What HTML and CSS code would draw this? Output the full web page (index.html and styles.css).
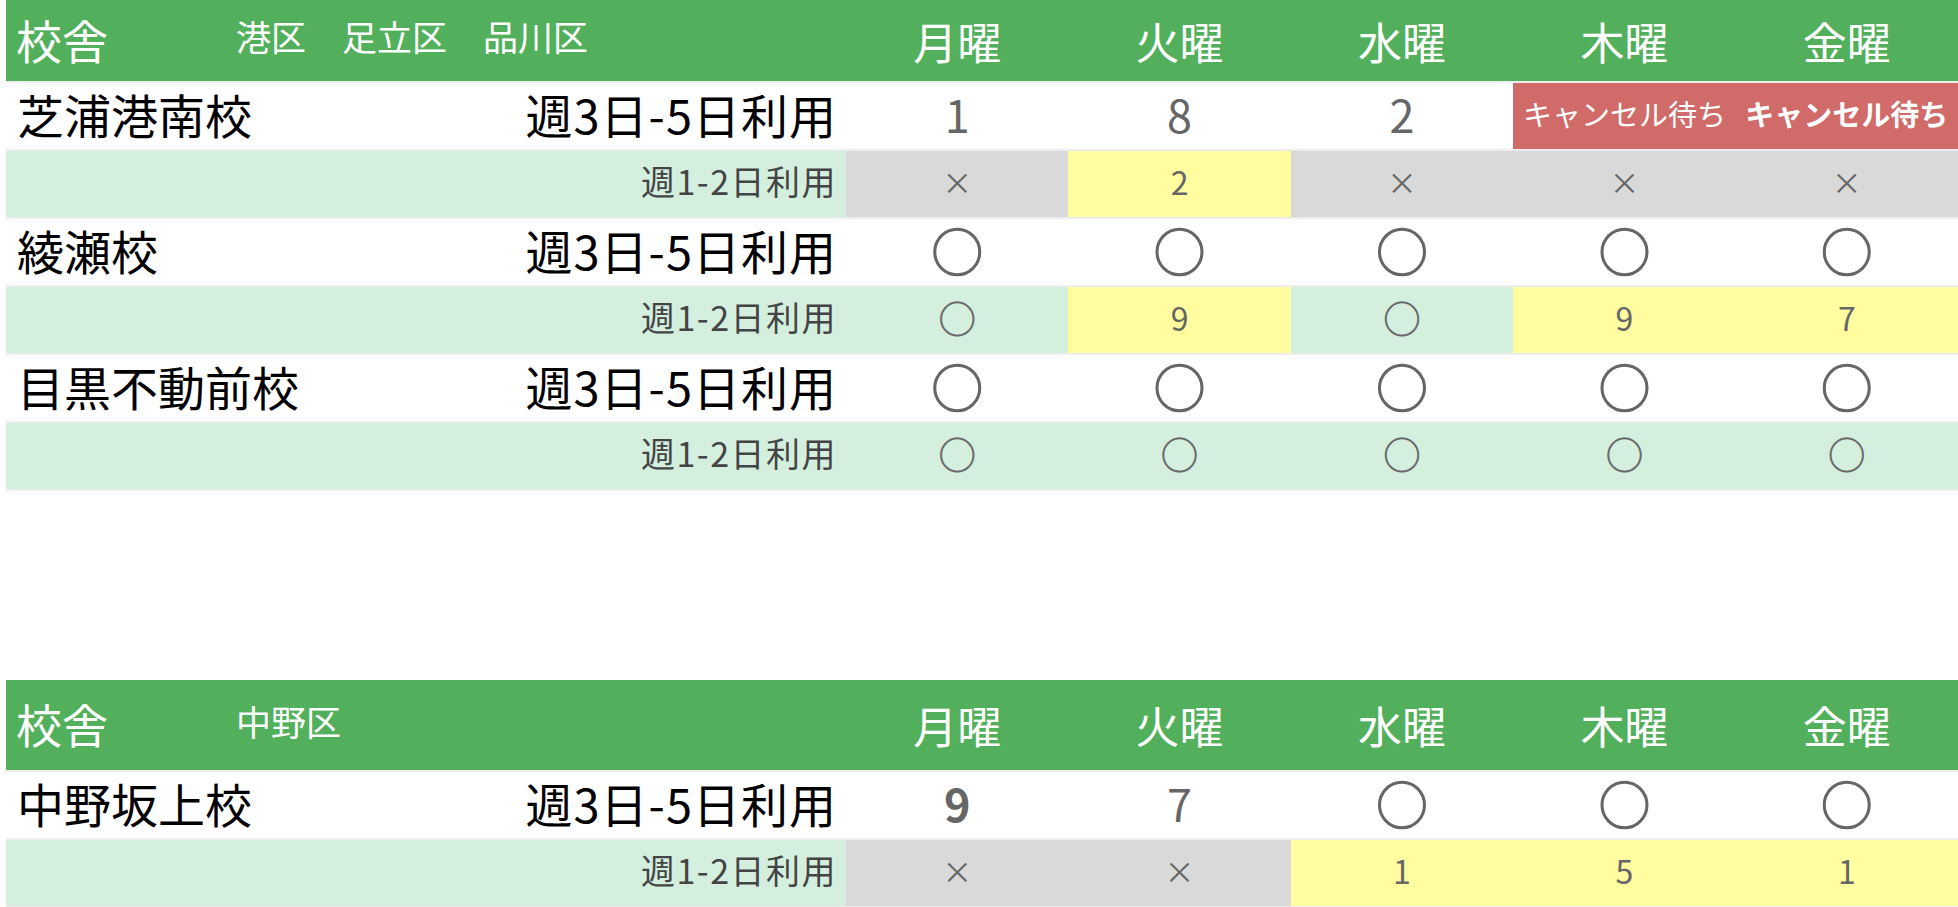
FILE: index.html
```html
<!DOCTYPE html>
<html lang="ja">
<head>
<meta charset="utf-8">
<title>空き状況</title>
<link rel="stylesheet" href="styles.css">
</head>
<body>
<div class="page">
  <table class="sched">
    <colgroup><col class="c-name"><col class="c-use"><col><col><col><col><col></colgroup>
    <thead>
      <tr class="head">
        <th colspan="2" class="h-school"><span class="h-title">校舎</span><span class="areas"><span>港区</span><span>足立区</span><span>品川区</span></span></th>
        <th>月曜</th><th>火曜</th><th>水曜</th><th>木曜</th><th>金曜</th>
      </tr>
    </thead>
    <tbody>
      <tr class="full">
        <td class="name">芝浦港南校</td><td class="use">週3日-5日利用</td>
        <td>1</td><td>8</td><td>2</td><td class="wait">キャンセル待ち</td><td class="wait strong">キャンセル待ち</td>
      </tr>
      <tr class="part">
        <td class="name"></td><td class="use">週1-2日利用</td>
        <td class="none">×</td><td class="few">2</td><td class="none">×</td><td class="none">×</td><td class="none">×</td>
      </tr>
      <tr class="full">
        <td class="name">綾瀬校</td><td class="use">週3日-5日利用</td>
        <td class="ok">◯</td><td class="ok">◯</td><td class="ok">◯</td><td class="ok">◯</td><td class="ok">◯</td>
      </tr>
      <tr class="part">
        <td class="name"></td><td class="use">週1-2日利用</td>
        <td class="ok">◯</td><td class="few">9</td><td class="ok">◯</td><td class="few">9</td><td class="few">7</td>
      </tr>
      <tr class="full">
        <td class="name">目黒不動前校</td><td class="use">週3日-5日利用</td>
        <td class="ok">◯</td><td class="ok">◯</td><td class="ok">◯</td><td class="ok">◯</td><td class="ok">◯</td>
      </tr>
      <tr class="part">
        <td class="name"></td><td class="use">週1-2日利用</td>
        <td class="ok">◯</td><td class="ok">◯</td><td class="ok">◯</td><td class="ok">◯</td><td class="ok">◯</td>
      </tr>
    </tbody>
  </table>

  <table class="sched second">
    <colgroup><col class="c-name"><col class="c-use"><col><col><col><col><col></colgroup>
    <thead>
      <tr class="head tall">
        <th colspan="2" class="h-school"><span class="h-title">校舎</span><span class="areas"><span>中野区</span></span></th>
        <th>月曜</th><th>火曜</th><th>水曜</th><th>木曜</th><th>金曜</th>
      </tr>
    </thead>
    <tbody>
      <tr class="full">
        <td class="name">中野坂上校</td><td class="use">週3日-5日利用</td>
        <td class="bold">9</td><td>7</td><td class="ok">◯</td><td class="ok">◯</td><td class="ok">◯</td>
      </tr>
      <tr class="part">
        <td class="name"></td><td class="use">週1-2日利用</td>
        <td class="none">×</td><td class="none">×</td><td class="few">1</td><td class="few">5</td><td class="few">1</td>
      </tr>
    </tbody>
  </table>
</div>
</body>
</html>
```
FILE: styles.css
```css
html, body {
  margin: 0;
  padding: 0;
  background: #fff;
}
body {
  font-family: "Noto Sans CJK JP", "Noto Sans", sans-serif;
}
.page {
  padding: 0 0 0 6px;
}
.sched {
  width: 100%;
  table-layout: fixed;
  border-collapse: collapse;
  border-spacing: 0;
}
.second {
  margin-top: 189px;
}
.c-name { width: 420px; }
.c-use { width: 420px; }

.sched th,
.sched td {
  padding: 0;
  border-bottom: 2px solid #eeeeee;
  text-align: center;
  vertical-align: middle;
  line-height: 1;
  box-sizing: border-box;
}
.head th {
  background: #52b05c;
  color: #fff;
  font-weight: 400;
  font-size: 44px;
  height: 82px;
}
.head.tall th {
  height: 91px;
}
.head th.h-school {
  text-align: left;
  padding-left: 10px;
}
.h-school {
  white-space: nowrap;
}
.h-title {
  display: inline-block;
  vertical-align: middle;
  font-size: 46px;
  position: relative;
  top: -5px;
}
.areas {
  display: inline-flex;
  gap: 36px;
  margin-left: 128px;
  font-size: 35px;
  vertical-align: middle;
  position: relative;
  top: -8px;
}

.sched td {
  height: 68px;
  padding-bottom: 6px;
  color: #666;
  font-size: 45px;
}
.sched td.name {
  text-align: left;
  padding-left: 11px;
  color: #000;
  font-size: 47px;
  white-space: nowrap;
}
.sched td.use {
  text-align: right;
  padding-right: 9px;
  color: #000;
  font-size: 47px;
  letter-spacing: 1px;
  white-space: nowrap;
}
.part td {
  background: #d5efdf;
  font-size: 32px;
}
.part td.use {
  color: #444;
  font-size: 34px;
  letter-spacing: 1.5px;
}
.full td {
  background: #fff;
}
.part td.none {
  background: #d9d9d9;
  font-size: 30px;
}
.part td.few {
  background: #fffda0;
}
.full td.ok {
  font-size: 50px;
  -webkit-text-stroke: 1.4px #666;
}
.part td.ok {
  font-size: 36px;
  -webkit-text-stroke: 0.7px #666;
}
.full td.wait {
  background: #d06b69;
  color: #fff;
  font-size: 29px;
  font-weight: 400;
  white-space: nowrap;
}
.full td.wait.strong {
  font-weight: 700;
}
.bold {
  font-weight: 700;
}
```
